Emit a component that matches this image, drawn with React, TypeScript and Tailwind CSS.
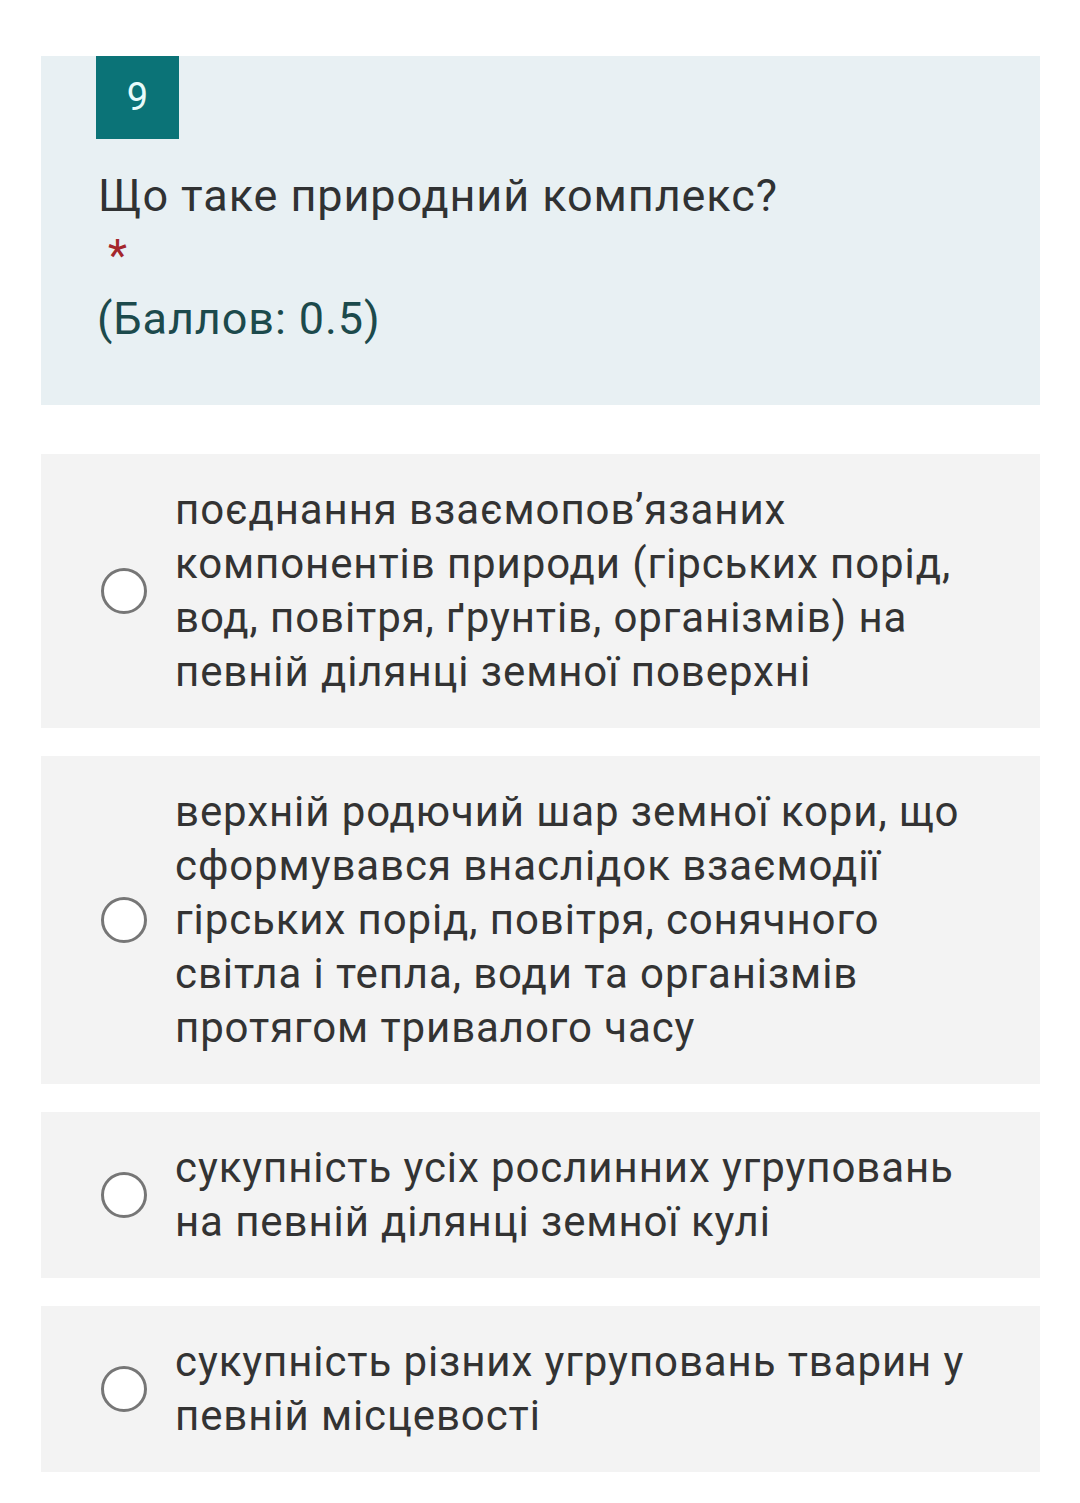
import React from "react";

const options: string[][] = [
  [
    "поєднання взаємопов’язаних",
    "компонентів природи (гірських порід,",
    "вод, повітря, ґрунтів, організмів) на",
    "певній ділянці земної поверхні",
  ],
  [
    "верхній родючий шар земної кори, що",
    "сформувався внаслідок взаємодії",
    "гірських порід, повітря, сонячного",
    "світла і тепла, води та організмів",
    "протягом тривалого часу",
  ],
  ["сукупність усіх рослинних угруповань", "на певній ділянці земної кулі"],
  ["сукупність різних угруповань тварин у", "певній місцевості"],
];

export default function App() {
  return (
    <div
      className="w-[1080px] min-h-[1503px] bg-white pt-[56px] pl-[41px] pr-[40px]"
      style={{ fontFamily: "Roboto, 'Noto Sans', sans-serif" }}
    >
      <div className="bg-[#e8f0f3] pl-[55px] pb-[59px]">
        <div className="w-[83px] h-[83px] bg-[#0b7377] flex items-center justify-center text-[#e8fbfb] text-[38px]">
          9
        </div>
        <div className="pl-[2px] mt-[30px] text-[45px] leading-[54px] tracking-[0.9px] text-[#303233] whitespace-nowrap">
          Що таке природний комплекс?
        </div>
        <div className="pl-[12px] text-[#a4262c] text-[44px] leading-[54px] h-[40px] mt-[6px]">
          *
        </div>
        <div className="pl-[1px] mt-[23px] text-[45px] leading-[54px] tracking-[0.9px] text-[#1c4a4c] whitespace-nowrap">
          (Баллов: 0.5)
        </div>
      </div>

      <div className="mt-[49px] flex flex-col gap-[28px]">
        {options.map((lines, i) => (
          <div
            key={i}
            className="bg-[#f3f3f3] flex items-center pl-[60px] py-[29px]"
          >
            <div className="w-[46px] h-[46px] rounded-full border-[3px] border-[#767676] bg-white shrink-0" />
            <div className="ml-[28px] text-[42px] leading-[54px] tracking-[0.9px] text-[#333333]">
              {lines.map((l, j) => (
                <div key={j} className="whitespace-nowrap">
                  {l}
                </div>
              ))}
            </div>
          </div>
        ))}
      </div>
    </div>
  );
}
